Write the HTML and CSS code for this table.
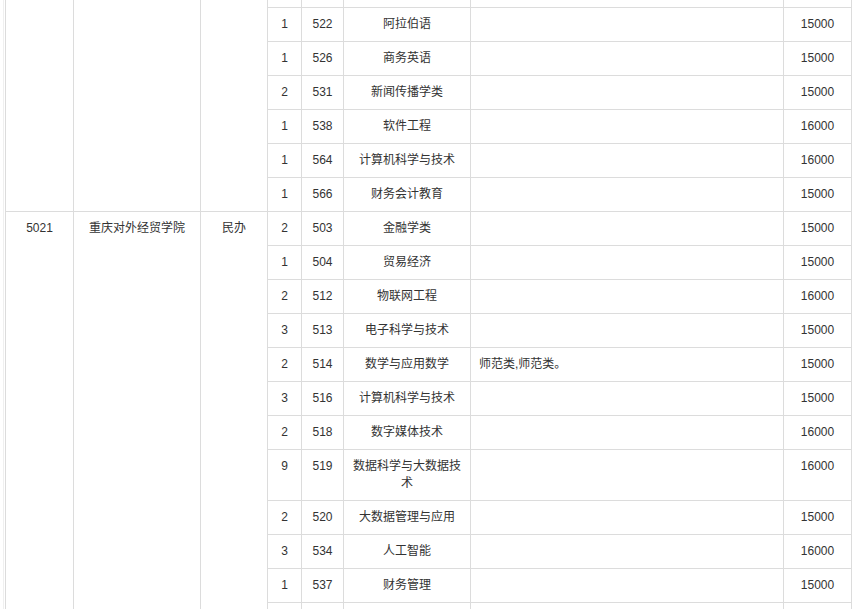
FILE: index.html
```html
<!DOCTYPE html>
<html lang="zh-CN">
<head>
<meta charset="utf-8">
<title>招生计划</title>
<link rel="stylesheet" href="styles.css">
</head>
<body>
<div class="wrap">
<table class="plan">
<colgroup>
<col class="c-code"><col class="c-name"><col class="c-type"><col class="c-num"><col class="c-mcode"><col class="c-major"><col class="c-note"><col class="c-fee">
</colgroup>
<tbody>
<tr class="lead"><td rowspan="7"></td><td rowspan="7"></td><td rowspan="7"></td><td></td><td></td><td></td><td class="note"></td><td></td></tr>
<tr><td>1</td><td>522</td><td>阿拉伯语</td><td class="note"></td><td>15000</td></tr>
<tr><td>1</td><td>526</td><td>商务英语</td><td class="note"></td><td>15000</td></tr>
<tr><td>2</td><td>531</td><td>新闻传播学类</td><td class="note"></td><td>15000</td></tr>
<tr><td>1</td><td>538</td><td>软件工程</td><td class="note"></td><td>16000</td></tr>
<tr><td>1</td><td>564</td><td>计算机科学与技术</td><td class="note"></td><td>16000</td></tr>
<tr><td>1</td><td>566</td><td>财务会计教育</td><td class="note"></td><td>15000</td></tr>
<tr><td rowspan="12">5021</td><td rowspan="12">重庆对外经贸学院</td><td rowspan="12">民办</td><td>2</td><td>503</td><td>金融学类</td><td class="note"></td><td>15000</td></tr>
<tr><td>1</td><td>504</td><td>贸易经济</td><td class="note"></td><td>15000</td></tr>
<tr><td>2</td><td>512</td><td>物联网工程</td><td class="note"></td><td>16000</td></tr>
<tr><td>3</td><td>513</td><td>电子科学与技术</td><td class="note"></td><td>15000</td></tr>
<tr><td>2</td><td>514</td><td>数学与应用数学</td><td class="note">师范类,师范类。</td><td>15000</td></tr>
<tr><td>3</td><td>516</td><td>计算机科学与技术</td><td class="note"></td><td>15000</td></tr>
<tr><td>2</td><td>518</td><td>数字媒体技术</td><td class="note"></td><td>16000</td></tr>
<tr><td>9</td><td>519</td><td>数据科学与大数据技术</td><td class="note"></td><td>16000</td></tr>
<tr><td>2</td><td>520</td><td>大数据管理与应用</td><td class="note"></td><td>15000</td></tr>
<tr><td>3</td><td>534</td><td>人工智能</td><td class="note"></td><td>16000</td></tr>
<tr><td>1</td><td>537</td><td>财务管理</td><td class="note"></td><td>15000</td></tr>
<tr><td></td><td></td><td></td><td class="note"></td><td></td></tr>
</tbody>
</table>
</div>
</body>
</html>
```
FILE: styles.css
```css
html, body {
  margin: 0;
  padding: 0;
  background: #fff;
}
body {
  font-family: "Liberation Sans", "Noto Sans CJK SC", sans-serif;
  font-size: 12px;
  color: #333;
  overflow: hidden;
}
.wrap {
  margin-left: 3px;
  border-left: 1px solid #f0f0f0;
  padding-left: 1px;
  width: 847px;
}
.plan {
  border-collapse: collapse;
  table-layout: fixed;
  width: 847px;
  margin-top: -27px;
}
.plan td {
  border: 1px solid #dcdcdc;
  padding: 8px;
  line-height: 17px;
  height: 17px;
  vertical-align: top;
  text-align: center;
}
.plan td.note {
  text-align: left;
}
.c-code { width: 68px; }
.c-name { width: 127px; }
.c-type { width: 67px; }
.c-num { width: 34px; }
.c-mcode { width: 42px; }
.c-major { width: 127px; }
.c-note { width: 313px; }
.c-fee { width: 68px; }
```
